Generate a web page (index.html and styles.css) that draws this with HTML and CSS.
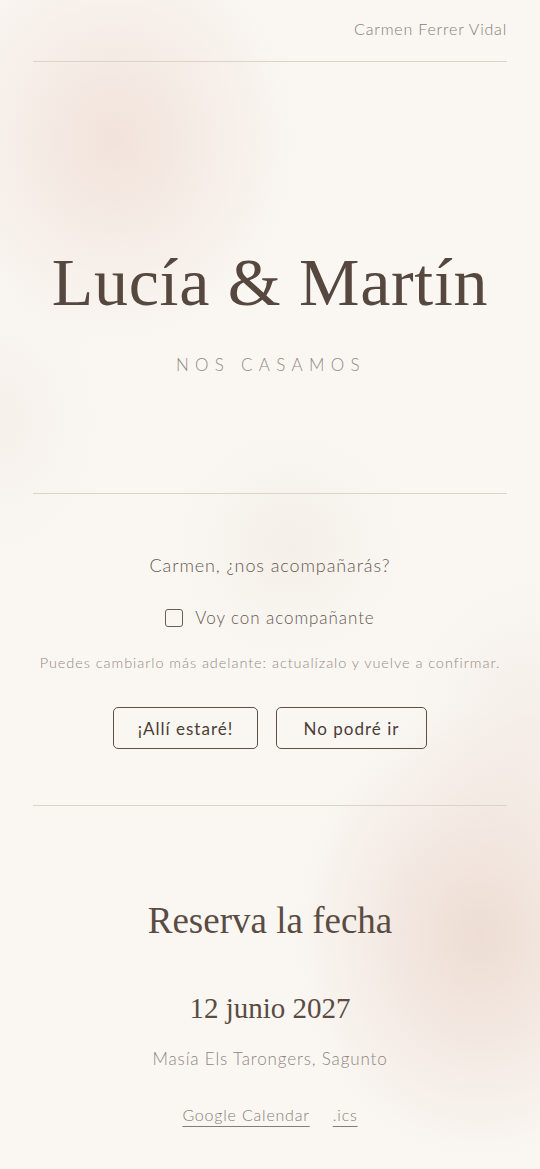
FILE: index.html
```html
<!DOCTYPE html>
<html lang="es">
<head>
<meta charset="utf-8">
<meta name="viewport" content="width=device-width, initial-scale=1">
<title>Lucía &amp; Martín</title>
<link rel="stylesheet" href="styles.css">
</head>
<body>
<div class="page">
  <header class="topbar">
    <span class="guest">Carmen Ferrer Vidal</span>
  </header>

  <section class="hero">
    <h1 class="names">Lucía &amp; Martín</h1>
    <p class="tagline">NOS CASAMOS</p>
  </section>

  <section class="rsvp">
    <p class="question">Carmen, ¿nos acompañarás?</p>
    <label class="plusone">
      <input type="checkbox" class="check">
      <span>Voy con acompañante</span>
    </label>
    <p class="hint">Puedes cambiarlo más adelante: actualízalo y vuelve a confirmar.</p>
    <div class="actions">
      <button class="btn btn-yes">¡Allí estaré!</button>
      <button class="btn btn-no">No podré ir</button>
    </div>
  </section>

  <section class="save">
    <h2 class="save-title">Reserva la fecha</h2>
    <p class="date">12 junio 2027</p>
    <p class="venue">Masía Els Tarongers, Sagunto</p>
    <div class="links">
      <a href="#" class="cal-link">Google Calendar</a>
      <a href="#" class="cal-link">.ics</a>
    </div>
  </section>
</div>
</body>
</html>
```

FILE: styles.css
```css
html, body {
  margin: 0;
  padding: 0;
}

body {
  min-height: 1169px;
  background-color: #faf7f3;
  background-image:
    radial-gradient(ellipse 190px 210px at 115px 140px, rgba(238, 219, 209, 0.7), rgba(238, 219, 209, 0) 100%),
    radial-gradient(ellipse 110px 150px at 0px 420px, rgba(240, 228, 220, 0.35), rgba(240, 228, 220, 0) 100%),
    radial-gradient(ellipse 120px 120px at 290px 545px, rgba(238, 229, 218, 0.45), rgba(238, 229, 218, 0) 100%),
    radial-gradient(ellipse 190px 230px at 480px 935px, rgba(234, 214, 203, 0.8), rgba(234, 214, 203, 0) 100%),
    radial-gradient(ellipse 130px 150px at 530px 720px, rgba(240, 230, 222, 0.5), rgba(240, 230, 222, 0) 100%);
  background-repeat: no-repeat;
  font-family: Lato, "Open Sans", sans-serif;
  color: #6a5c54;
}

.page {
  padding: 0 33px;
}

.topbar {
  display: flex;
  justify-content: flex-end;
  padding: 18px 0 21px;
  border-bottom: 1px solid #ddd4c8;
}

.guest {
  font-size: 16px;
  line-height: 22px;
  letter-spacing: 0.05em;
  color: #877c75;
  font-weight: 300;
}

.hero {
  display: flex;
  flex-direction: column;
  align-items: center;
  padding: 180px 0 116px;
  border-bottom: 1px solid #ddd4c8;
}

.names {
  margin: 0;
  font-family: "Liberation Serif", "Times New Roman", serif;
  font-weight: normal;
  font-size: 68px;
  line-height: 80px;
  letter-spacing: 0.01em;
  color: #56473f;
}

.tagline {
  margin: 31px 0 0;
  font-size: 17px;
  line-height: 24px;
  letter-spacing: 0.37em;
  color: #938880;
  font-weight: 300;
  padding-left: 0.1em;
}

.rsvp {
  display: flex;
  flex-direction: column;
  align-items: center;
  padding: 58px 0 56px;
  border-bottom: 1px solid #ddd4c8;
}

.question {
  margin: 0;
  font-size: 18px;
  line-height: 26px;
  color: #665850;
  font-weight: 300;
  letter-spacing: 0.05em;
}

.plusone {
  margin-top: 27px;
  display: flex;
  align-items: center;
  gap: 12px;
  font-size: 17px;
  line-height: 26px;
  color: #665850;
  font-weight: 300;
  letter-spacing: 0.055em;
}

.check {
  appearance: none;
  -webkit-appearance: none;
  margin: 0;
  width: 18px;
  height: 18px;
  border: 1.5px solid #6b5d56;
  border-radius: 3px;
  background: transparent;
  box-sizing: border-box;
}

.hint {
  margin: 22px 0 0;
  font-size: 14.5px;
  line-height: 20px;
  color: #948982;
  font-weight: 300;
  letter-spacing: 0.065em;
  white-space: nowrap;
}

.actions {
  margin-top: 34px;
  display: flex;
  gap: 18px;
}

.btn {
  height: 42px;
  border: 1.5px solid #5e4f48;
  border-radius: 5px;
  background: transparent;
  font-family: Lato, "Open Sans", sans-serif;
  font-size: 17px;
  font-weight: 400;
  color: #4a3d36;
  letter-spacing: 0.06em;
  box-sizing: border-box;
  padding: 0;
}

.btn-yes {
  width: 145px;
}

.btn-no {
  width: 151px;
}

.save {
  display: flex;
  flex-direction: column;
  align-items: center;
  padding: 92px 0 40px;
}

.save-title {
  margin: 0;
  font-family: "Liberation Serif", "Times New Roman", serif;
  font-weight: normal;
  font-size: 37px;
  line-height: 46px;
  color: #5a4b43;
}

.date {
  margin: 46px 0 0;
  font-family: "Liberation Serif", "Times New Roman", serif;
  font-size: 29px;
  line-height: 36px;
  color: #5a4b43;
}

.venue {
  margin: 21px 0 0;
  font-size: 17px;
  line-height: 24px;
  color: #908580;
  font-weight: 300;
  letter-spacing: 0.05em;
}

.links {
  margin-top: 32px;
  display: flex;
  gap: 23px;
}

.cal-link {
  font-size: 16px;
  line-height: 24px;
  color: #877c75;
  font-weight: 300;
  letter-spacing: 0.05em;
  text-decoration: underline;
  text-decoration-color: #877c75;
  text-decoration-thickness: 1px;
  text-underline-offset: 5px;
}
```
